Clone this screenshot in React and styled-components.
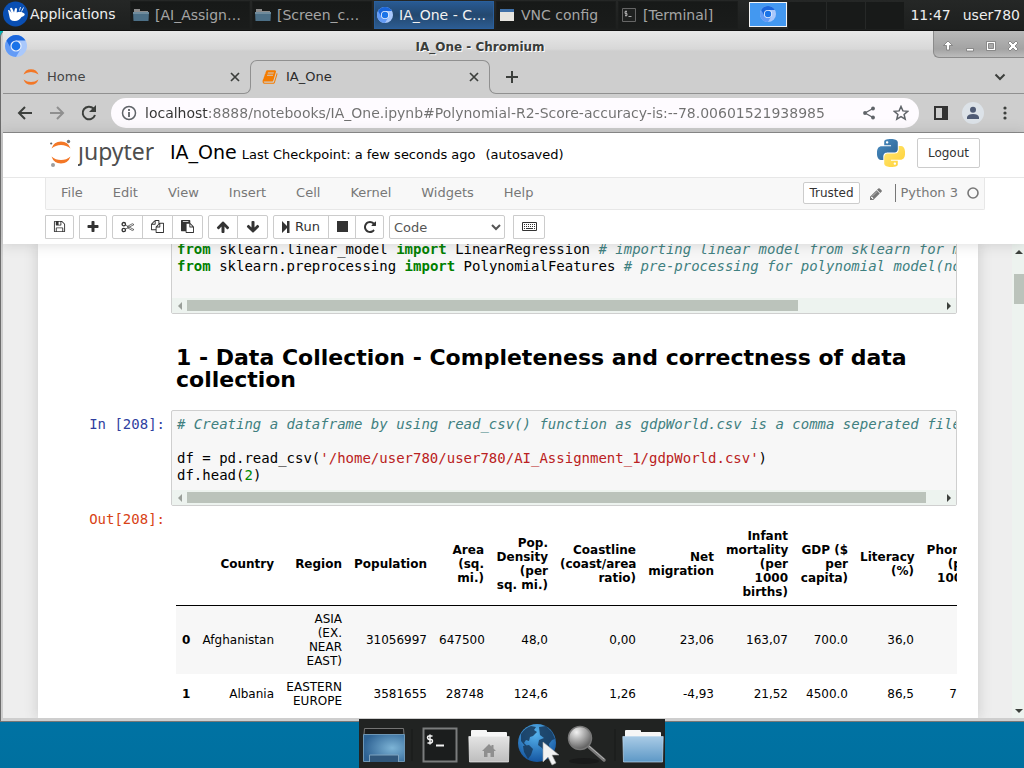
import React from "react";
import styled, { createGlobalStyle, css } from "styled-components";

const GlobalStyle = createGlobalStyle`
  *, *::before, *::after { box-sizing: border-box; }
  body {
    margin: 0;
    font-family: "DejaVu Sans", sans-serif;
    font-size: 13px;
    color: #000;
  }
  button, input, select { font-family: inherit; }
  svg { display: block; flex: none; }
`;

/* ---------- desktop ---------- */

const Desktop = styled.div`
  position: relative;
  display: flex;
  flex-direction: column;
  height: 100vh;
  min-height: 480px;
  overflow: hidden;
  background: linear-gradient(#00b8b8, #0074a6 90%, #00709f);
`;

const Taskbar = styled.header`
  display: flex;
  align-items: center;
  height: 31px;
  flex: none;
  background: linear-gradient(#252726, #1d1f1e);
  border-bottom: 1px solid #111;
  color: #eee;
  font-size: 14px;
`;

const AppsButton = styled.button`
  display: flex;
  align-items: center;
  gap: 2px;
  width: 130px;
  height: 100%;
  padding: 0 0 2px 3px;
  border: 0;
  background: none;
  color: inherit;
  font-size: 14px;
`;

const TaskList = styled.nav`
  display: flex;
  flex: 1;
  gap: 2px;
`;

const TaskButton = styled.button`
  display: flex;
  align-items: center;
  gap: 6px;
  width: 120px;
  height: 28px;
  padding: 0 2px 1px;
  border: 1px solid ${(p) => (p.$active ? "#2a5f9c" : "#1b1d1c")};
  background: ${(p) => (p.$active ? "linear-gradient(#285a93, #24486f 50%, #2c5c91)" : "linear-gradient(#171918, #1a1c1b)")};
  color: ${(p) => (p.$active ? "#f2f2f2" : "#a5a5a5")};
  font-size: 14px;
  white-space: nowrap;
`;

const Pager = styled.div`
  display: flex;
  gap: 1px;
  height: 27px;
  background: #262827;
`;

const Workspace = styled.button`
  display: flex;
  align-items: center;
  justify-content: center;
  width: 38px;
  height: ${(p) => (p.$active ? "25px" : "27px")};
  padding: 0;
  border: ${(p) => (p.$active ? "1px solid #f4f4f4" : "0")};
  background: ${(p) => (p.$active ? "#4398f0" : "#181a19")};
`;

const Clock = styled.time`
  padding: 0 6px 1px;
`;

const UserName = styled.span`
  padding: 0 4px 1px 6px;
`;

/* ---------- browser window ---------- */

const Window = styled.main`
  display: flex;
  flex-direction: column;
  flex: 1;
  min-height: 0;
  margin-bottom: 46px;
  padding: 0 0 3px 2px;
  border-left: 1px solid #6c6c6c;
  border-bottom: 1px solid #777;
  border-top-left-radius: 6px;
  background: #cecece;
`;

const TitleBar = styled.div`
  display: flex;
  height: 27px;
  flex: none;
  padding-left: 2px;
  background: linear-gradient(#e8e8e8, #d8d8d8 18px, #cecece 20px);
`;

const TitleIcon = styled.span`
  padding-top: 4px;
`;

const Title = styled.h1`
  flex: 1;
  margin: 0;
  font-size: 12px;
  line-height: 32px;
  text-align: center;
  color: #3a3d3a;
  text-shadow: 1px 1px 0 #fff;
`;

const WindowControls = styled.div`
  display: flex;
  align-items: center;
  width: 91px;
  padding: 4px 0 0 3px;
  border: solid #8b8b8b;
  border-width: 0 0 1px 1px;
  border-bottom-left-radius: 6px;
  background: linear-gradient(#b9b9b9, #a3a3a3 18px, #bcbcbc);
`;

const ControlButton = styled.button`
  display: flex;
  justify-content: center;
  width: 22px;
  padding: 0;
  border: 0;
  background: none;
`;

const TabStrip = styled.div`
  display: flex;
  align-items: flex-end;
  height: 36px;
  flex: none;
`;

const tabBox = css`
  display: flex;
  align-items: center;
  width: 240px;
  height: 34px;
`;

const Tab = styled.div`
  ${tabBox}
  padding: 0 0 0 20px;
  border-bottom: 1px solid #909090;
  color: #444;
`;

const ActiveTab = styled.div`
  ${tabBox}
  position: relative;
  margin: 0 -1px;
  padding: 0 8px 1px 12px;
  color: #2b2b2b;
  &::before {
    content: "";
    position: absolute;
    inset: 0 0 auto;
    height: 8px;
    border: 1px solid #909090;
    border-bottom: 0;
    border-radius: 7px 7px 0 0;
  }
`;

const Shoulder = styled.span`
  width: 8px;
  height: 27px;
  border-bottom: 1px solid #909090;
  ${(p) =>
    p.$side === "left"
      ? "border-right: 1px solid #909090; border-bottom-right-radius: 7px;"
      : "border-left: 1px solid #909090; border-bottom-left-radius: 7px;"}
`;

const TabLabel = styled.span`
  flex: 1;
  margin-left: 8px;
  line-height: 16px;
`;

const StripRest = styled.div`
  display: flex;
  align-items: center;
  justify-content: space-between;
  flex: 1;
  height: 34px;
  padding: 0 16px 0 7px;
  border-bottom: 1px solid #909090;
`;

const IconButton = styled.button`
  display: flex;
  align-items: center;
  justify-content: center;
  width: ${(p) => p.$w || 16}px;
  height: 24px;
  padding: 0;
  border: 0;
  background: none;
  color: #3c3f3c;
`;

const BrowserBar = styled.div`
  display: flex;
  align-items: center;
  height: 39px;
  flex: none;
  padding: 0 3px 0 6px;
  border-bottom: 1px solid #8a8a8a;
`;

const AddressBar = styled.form`
  display: flex;
  align-items: center;
  flex: 1;
  height: 30px;
  margin: 0 6px;
  padding: 0 2px 0 10px;
  border-radius: 15px;
  background: #fefbff;
  color: #5f6368;
`;

const UrlInput = styled.input`
  flex: 1;
  min-width: 0;
  margin-left: 8px;
  padding: 0;
  border: 0;
  outline: 0;
  font-size: 14px;
  line-height: 20px;
  color: transparent;
  background: linear-gradient(90deg, #333 64px, #707070 64px);
  background-clip: text;
`;

/* ---------- jupyter page ---------- */

const Page = styled.section`
  display: flex;
  flex-direction: column;
  flex: 1;
  min-height: 0;
  background: #eee;
`;

const PageHeader = styled.header`
  position: relative;
  z-index: 1;
  flex: none;
  background: #fff;
  box-shadow: 0 0 12px 1px rgba(87, 87, 87, 0.2);
`;

const HeaderRow = styled.div`
  display: flex;
  align-items: center;
  height: 45px;
  padding: 0 44px 4px 47px;
  border-bottom: 1px solid #e7e7e7;
`;

const LogoLink = styled.a`
  display: flex;
  align-items: center;
  gap: 6px;
  width: 104px;
  color: #4e4e4e;
  text-decoration: none;
`;

/* The wordmark's j is dotless: the strip that holds the dot is clipped. */
const LogoText = styled.span`
  padding-bottom: 4px;
  font-family: "Noto Sans", sans-serif;
  font-size: 23px;
  line-height: 24px;
  clip-path: inset(6px 0 0);
`;

const NotebookTitle = styled.div`
  display: flex;
  align-items: baseline;
  flex: 1;
  margin-left: 16px;
  padding-bottom: 3px;
  white-space: nowrap;
`;

const NotebookName = styled.span`
  font-size: 19px;
  line-height: 24px;
`;

const Checkpoint = styled.span`
  margin-left: 5px;
`;

const Autosave = styled.span`
  margin-left: 10px;
`;

const LogoutButton = styled.button`
  height: 30px;
  margin-left: 12px;
  padding: 0 10px;
  border: 1px solid #ccc;
  border-radius: 2px;
  background: #fff;
  color: #333;
  font-size: 12px;
`;

const MenuBar = styled.nav`
  display: flex;
  align-items: center;
  height: 32px;
  margin: 0 39px 0 42px;
  padding-right: 4px;
  border: solid #e7e7e7;
  border-width: 0 1px 1px;
  border-radius: 0 0 2px 2px;
  background: #f8f8f8;
  color: #777;
`;

const MenuItem = styled.a`
  padding: 0 15px 2px;
  line-height: 20px;
  color: inherit;
  text-decoration: none;
`;

const Trusted = styled.button`
  height: 22px;
  margin: 0 9px 2px auto;
  padding: 0 5px;
  border: 1px solid #ccc;
  border-radius: 2px;
  background: #fff;
  color: #333;
  font-size: 12px;
`;

const Kernel = styled.span`
  display: flex;
  align-items: center;
  gap: 8px;
  margin: 0 0 2px 12px;
  padding-left: 5px;
  border-left: 1px solid #777;
  line-height: 18px;
`;

const ToolBar = styled.div`
  display: flex;
  gap: 5px;
  padding: 5px 42px;
`;

const ToolGroup = styled.div`
  display: flex;
`;

const ToolButton = styled.button`
  display: flex;
  align-items: center;
  justify-content: center;
  gap: 5px;
  width: ${(p) => p.$w || 30}px;
  height: 24px;
  padding: 0 0 1px;
  border: 1px solid #ccc;
  background: #fff;
  color: #333;
  font-size: 13px;
  & + & { margin-left: -1px; }
  &:first-child { border-radius: 2px 0 0 2px; }
  &:last-child { border-radius: 0 2px 2px 0; }
`;

const CellType = styled.select`
  width: 116px;
  height: 24px;
  margin-right: 3px;
  padding: 0;
  border: 1px solid #ccc;
  border-radius: 2px;
  background: #fff;
  color: #555;
  font-size: 13px;
`;

const Site = styled.div`
  display: flex;
  flex: 1;
  min-height: 0;
`;

const NotebookArea = styled.div`
  flex: 1;
  min-width: 0;
  overflow: hidden;
  padding: 0 34px 0 35px;
`;

const Notebook = styled.article`
  display: flow-root;
  min-height: 100%;
  padding-right: 21px;
  background: #fff;
  box-shadow: 0 0 12px 1px rgba(87, 87, 87, 0.2);
`;

const Cell = styled.div`
  display: flex;
`;

const Prompt = styled.div`
  flex: none;
  width: 133px;
  padding: ${(p) => (p.$out ? 5 : 6)}px 6px 0 0;
  font: 14px/17px "DejaVu Sans Mono", monospace;
  text-align: right;
  color: ${(p) => (p.$out ? "#d84315" : "#303f9f")};
`;

const CodeBox = styled.div`
  flex: 1;
  min-width: 0;
  border: 1px solid #cfcfcf;
  border-radius: 2px;
  background: #f7f7f7;
`;

const Code = styled.pre`
  margin: 0;
  padding: 5px 0 6px 5px;
  overflow: hidden;
  font: 14px/17px "DejaVu Sans Mono", monospace;
`;

const tokenStyles = {
  keyword: "color: #008000; font-weight: bold;",
  comment: "color: #408080; font-style: italic;",
  string: "color: #ba2121;",
  number: "color: #008800;",
};

const Token = styled.span`
  ${(p) => tokenStyles[p.$kind]}
`;

const HScroll = styled.div`
  display: flex;
  align-items: center;
  height: 15px;
  background: #edf3ef;
`;

const HTrack = styled.div`
  flex: 1;
`;

const HThumb = styled.div`
  width: ${(p) => p.$size}%;
  height: 11px;
  background: #bbc3bb;
`;

const Arrow = styled.span`
  display: flex;
  align-items: center;
  justify-content: center;
  flex: none;
  width: 15px;
  height: 15px;
  color: ${(p) => (p.$dim ? "#9a9f9a" : "#3c403c")};
`;

const TextCell = styled.div`
  padding: 33px 0 19px 138px;
`;

const SectionHeading = styled.h2`
  margin: 0;
  font-size: 22px;
  line-height: 22px;
`;

const FirstCell = styled(Cell)`
  margin-top: -9px;
`;

const Output = styled.div`
  flex: 1;
  min-width: 0;
  overflow: hidden;
  padding: 17px 0 0 5px;
`;

const DataTable = styled.table`
  width: 806px;
  table-layout: fixed;
  border-collapse: collapse;
  font-size: 12px;
  line-height: 14px;
  text-align: right;
  white-space: pre-line;
  th, td { padding: 6px; vertical-align: middle; }
  thead { border-bottom: 1px solid #000; }
  tbody tr:nth-child(odd) { background: #f7f7f7; }
`;

const VScroll = styled.div`
  display: flex;
  flex-direction: column;
  flex: none;
  width: 12px;
  padding-left: 2px;
  overflow: hidden;
  background: #edf3ef;
`;

const VTrack = styled.div`
  flex: 1;
  padding-top: 15px;
`;

const VThumb = styled.div`
  height: 30px;
  background: #bbc3bb;
`;

const VArrow = styled(Arrow)`
  width: 10px;
`;

/* ---------- dock ---------- */

const Dock = styled.nav`
  position: absolute;
  bottom: 0;
  left: 50%;
  transform: translateX(-50%);
  display: flex;
  align-items: center;
  gap: 7px;
  width: 306px;
  height: 49px;
  padding: 2px 0 0 4px;
  background: #212322;
`;

const DockButton = styled.button`
  display: flex;
  justify-content: center;
  width: 42px;
  padding: 0;
  border: 0;
  background: none;
`;

const DockDivider = styled.span`
  width: 2px;
  height: 32px;
  margin: 0 -1px;
  background: #1c1e1d;
`;

/* ---------- icons ---------- */

const faPaths = {
  plus: "M1600 736v192q0 40-28 68t-68 28h-416v416q0 40-28 68t-68 28h-192q-40 0-68-28t-28-68v-416h-416q-40 0-68-28t-28-68v-192q0-40 28-68t68-28h416v-416q0-40 28-68t68-28h192q40 0 68 28t28 68v416h416q40 0 68 28t28 68z",
  save: "M512 1536h768v-384h-768v384zm896 0h128v-896q0-14-10-38.5t-20-34.5l-281-281q-10-10-34-20t-39-10v416q0 40-28 68t-68 28h-576q-40 0-68-28t-28-68v-416h-128v1280h128v-416q0-40 28-68t68-28h832q40 0 68 28t28 68v416zm-384-928v-320q0-13-9.5-22.5t-22.5-9.5h-192q-13 0-22.5 9.5t-9.5 22.5v320q0 13 9.5 22.5t22.5 9.5h192q13 0 22.5-9.5t9.5-22.5zm640 32v928q0 40-28 68t-68 28h-1344q-40 0-68-28t-28-68v-1344q0-40 28-68t68-28h928q40 0 88 20t76 48l280 280q28 28 48 76t20 88z",
  copy: "M1696 384q40 0 68 28t28 68v1216q0 40-28 68t-68 28h-960q-40 0-68-28t-28-68v-288h-544q-40 0-68-28t-28-68v-672q0-40 20-88t48-76l408-408q28-28 76-48t88-20h416q40 0 68 28t28 68v328q68-40 128-40h416zm-544 213l-299 299h299v-299zm-640-384l-299 299h299v-299zm196 647l316-316v-416h-384v416q0 40-28 68t-68 28h-416v640h512v-256q0-40 20-88t48-76zm956 804v-1152h-384v416q0 40-28 68t-68 28h-416v640h896z",
  paste: "M768 1664h896v-640h-416q-40 0-68-28t-28-68v-416h-384v1152zm256-1440v-64q0-13-9.5-22.5t-22.5-9.5h-704q-13 0-22.5 9.5t-9.5 22.5v64q0 13 9.5 22.5t22.5 9.5h704q13 0 22.5-9.5t9.5-22.5zm256 672h299l-299-299v299zm512 128v672q0 40-28 68t-68 28h-960q-40 0-68-28t-28-68v-160h-544q-40 0-68-28t-28-68v-1344q0-40 28-68t68-28h1088q40 0 68 28t28 68v328q21 13 36 28l408 408q28 28 48 76t20 88z",
  up: "M1675 971q0 51-37 90l-75 75q-38 38-91 38-54 0-90-38l-294-293v704q0 52-37.5 84.5t-90.5 32.5h-128q-53 0-90.5-32.5t-37.5-84.5v-704l-294 293q-36 38-90 38t-90-38l-75-75q-38-38-38-90 0-53 38-91l651-651q35-37 90-37 54 0 91 37l651 651q37 39 37 91z",
  repeat: "M1664 256v448q0 26-19 45t-45 19h-448q-42 0-59-40-17-39 14-69l138-138q-148-137-349-137-104 0-198.5 40.5t-163.5 109.5-109.5 163.5-40.5 198.5 40.5 198.5 109.5 163.5 163.5 109.5 198.5 40.5q119 0 225-52t179-147q7-10 23-12 15 0 25 9l137 138q9 8 9.5 20.5t-7.5 22.5q-109 132-264 204.5t-327 72.5q-156 0-298-61t-245-164-164-245-61-298 61-298 164-245 245-164 298-61q147 0 284.5 55.5t244.5 156.5l130-129q29-31 70-14 39 17 39 59z",
  pencil: "M491 1536l91-91-235-235-91 91v107h128v128h107zm523-928q0-22-22-22-10 0-17 7l-542 542q-7 7-7 17 0 22 22 22 10 0 17-7l542-542q7-7 7-17zm-54-192l416 416-832 832h-416v-416zm683 96q0 53-37 90l-166 166-416-416 166-165q36-38 90-38 53 0 91 38l235 234q37 39 37 91z",
  book: "M1703 478q40 57 18 129l-275 906q-19 64-76.5 107.5t-122.5 43.5h-923q-77 0-148.5-53.5t-99.5-131.5q-24-67-2-127 0-4 3-27t4-37q1-8-3-21.5t-3-19.5q2-11 8-21t16.5-23.5 16.5-23.5q23-38 45-91.5t30-91.5q3-10 .5-30t-.5-28q3-11 17-28t17-23q21-36 42-92t25-90q1-9-2.5-32t.5-28q4-13 22-30.5t22-22.5q19-26 42.5-84.5t27.5-96.5q1-8-3-25.5t-2-26.5q2-8 9-18t18-23 17-21q8-12 16.5-30.5t15-35 16-36 19.5-32 26.5-23.5 36-11.5 47.5 5.5l-1 3q38-9 51-9h761q74 0 114 56t18 130l-274 906q-36 119-71.5 153.5t-128.5 34.5h-869q-27 0-38 15-11 16-1 43 24 70 144 70h923q29 0 56-15.5t35-41.5l300-987q7-22 5-57 38 15 59 43zm-1064 2q-4 13 2 22.5t20 9.5h608q13 0 25.5-9.5t16.5-22.5l21-64q4-13-2-22.5t-20-9.5h-608q-13 0-25.5 9.5t-16.5 22.5zm-83 256q-4 13 2 22.5t20 9.5h608q13 0 25.5-9.5t16.5-22.5l21-64q4-13-2-22.5t-20-9.5h-608q-13 0-25.5 9.5t-16.5 22.5z",
};

const Glyph = ({ name, size = 14, color = "currentColor", flip }) => (
  <svg width={size} height={size} viewBox="0 0 1792 1792" fill={color}>
    <path d={faPaths[name]} transform={flip ? "rotate(180 896 896)" : undefined} />
  </svg>
);

const ChromiumIcon = ({ size = 22 }) => (
  <svg width={size} height={size} viewBox="0 0 22 22">
    <circle cx="11" cy="11" r="11" fill="#a9c8fb" />
    <path d="M11 11L1.5 5.5A11 11 0 0 0 11 22l4.8-8.3z" fill="#639bf6" />
    <path d="M1.5 5.5A11 11 0 0 1 20.5 5.5H11L6.2 13.7z" fill="#1a66dc" />
    <circle cx="11" cy="11" r="5.6" fill="#e8f0fe" />
    <circle cx="11" cy="11" r="4.4" fill="#1a73e8" />
  </svg>
);

const MouseLogo = () => (
  <svg width="25" height="26" viewBox="0 0 25 26">
    <circle cx="12.500" cy="13" r="12.500" fill="#0a4fb3" />
    <path d="M5 9q1.500-.5 2.500 1.500L8.500 12 7 7.500Q8.500 6 9.500 8l1.500 3.500L12 7.500q1.500-1 2 .5l-.3 3.500Q17 10 20.500 12q1.500.5 1.200 2-1.200 1.500-3.200 2-2.500 4-6.500 4-5 .3-5.500-4z" fill="#fff" />
    <path d="M16.500 9.500l1-3.500M18.500 10.500l2-4" stroke="#fff" strokeWidth=".9" />
  </svg>
);

const SmallFolder = () => (
  <svg width="16" height="16" viewBox="0 0 16 16">
    <path d="M1 2h6v2h8v2H1z" fill="#8c8c8c" />
    <path d="M0 5h16l-.5 9H.5z" fill="#4c6f86" />
    <path d="M0 5h16v2H0z" fill="#6f8b9c" />
  </svg>
);

const SmallWindow = () => (
  <svg width="16" height="16" viewBox="0 0 16 16">
    <path d="M1 2h14v12H1z" fill="#e6e4df" />
    <path d="M1 2h14v3H1z" fill="#3f6fa6" />
  </svg>
);

const SmallTerminal = () => (
  <svg width="16" height="16" viewBox="0 0 16 16">
    <path d="M1.500 1.500h13v13h-13z" fill="#1f2120" stroke="#666" />
    <path d="M6 4.500H4v2h2v2H4M5 3.500v6M7.500 9.500h3" fill="none" stroke="#aaa" />
  </svg>
);

const JupyterRings = ({ size = 16 }) => (
  <svg width={size} height={size} viewBox="0 0 16 16" fill="#f37726">
    <path d="M.5 5.500a8 8 0 0 1 15 0Q12 3 8 3T.5 5.500z" />
    <path d="M.5 10.500a8 8 0 0 0 15 0Q12 13 8 13T.5 10.500z" />
  </svg>
);

const JupyterLogo = () => (
  <svg width="22" height="28" viewBox="0 0 22 28">
    <path d="M1.500 9.500a10 10 0 0 1 19 0q-4-3.500-9.500-3.500t-9.500 3.500zM1.500 17.500a10 10 0 0 0 19 0q-4 3.500-9.500 3.500t-9.500-3.500z" fill="#f37726" />
    <circle cx="18.500" cy="2.500" r="1.700" fill="#767677" />
    <circle cx="1.200" cy="4.500" r="1.100" fill="#616262" />
    <circle cx="3" cy="26" r="2" fill="#9e9e9e" />
  </svg>
);

const snake =
  "M14.25.18l.9.2.73.26.59.3.45.32.34.34.25.34.16.33.1.3.04.26.02.2-.01.13V8.500l-.05.63-.13.55-.21.46-.26.38-.3.31-.33.25-.35.19-.35.14-.33.1-.3.07-.26.04-.21.02H8.77l-.69.05-.59.14-.5.22-.41.27-.33.32-.27.35-.2.36-.15.37-.1.35-.07.32-.04.27-.02.21v3.06H3.17l-.21-.03-.28-.07-.32-.12-.35-.18-.36-.26-.36-.36-.35-.46-.32-.59-.28-.73-.21-.88-.14-1.05-.05-1.23.06-1.22.16-1.04.24-.87.32-.71.36-.57.4-.44.42-.33.42-.24.4-.16.36-.1.32-.05.24-.01h.16l.06.01h8.16v-.83H6.18l-.01-2.75-.02-.37.05-.34.11-.31.17-.28.25-.26.31-.23.38-.2.44-.18.51-.15.58-.12.64-.1.71-.06.77-.04.84-.02 1.27.05zm-6.300 1.980l-.23.33-.08.41.08.41.23.34.33.22.41.09.41-.09.33-.22.23-.34.08-.41-.08-.41-.23-.33-.33-.22-.41-.09-.41.09z";

const PythonLogo = () => (
  <svg width="28" height="28" viewBox="0 0 24 24">
    <defs>
      <linearGradient id="pyBlue" x1="0" y1="0" x2="1" y2="1">
        <stop offset="0" stopColor="#4a8fc4" />
        <stop offset="1" stopColor="#2b5f8f" />
      </linearGradient>
      <linearGradient id="pyYellow" x1="1" y1="1" x2="0" y2="0">
        <stop offset="0" stopColor="#ffe873" />
        <stop offset="1" stopColor="#ffcf35" />
      </linearGradient>
    </defs>
    <path d={snake} fill="url(#pyBlue)" />
    <path d={snake} fill="url(#pyYellow)" transform="rotate(180 12 12)" />
  </svg>
);

const Line = ({ d, size = 16, width = 2, color = "currentColor", fill = "none" }) => (
  <svg width={size} height={size} viewBox={`0 0 ${size} ${size}`} fill={fill} stroke={color} strokeWidth={width}>
    <path d={d} />
  </svg>
);

const ReloadIcon = () => (
  <svg width="16" height="16" viewBox="0 0 16 16">
    <path d="M14 10A6.300 6.300 0 1 1 12.500 3.500" fill="none" stroke="currentColor" strokeWidth="2" />
    <path d="M15 0v7H8z" fill="currentColor" />
  </svg>
);

const InfoIcon = () => (
  <svg width="16" height="16" viewBox="0 0 16 16" fill="none" stroke="currentColor">
    <circle cx="8" cy="8" r="6.500" strokeWidth="1.500" />
    <path d="M8 7v5M8 4v2" strokeWidth="1.800" />
  </svg>
);

const ShareIcon = () => (
  <svg width="16" height="16" viewBox="0 0 16 16" fill="#5f6368">
    <path d="M12 3.500L4 8l8 4.500" fill="none" stroke="#5f6368" strokeWidth="1.300" />
    <circle cx="12" cy="3.500" r="1.900" />
    <circle cx="4" cy="8" r="1.900" />
    <circle cx="12" cy="12.500" r="1.900" />
  </svg>
);

const PanelIcon = () => (
  <svg width="16" height="16" viewBox="0 0 16 16">
    <path d="M2 2h12v12H2z" fill="none" stroke="#333" strokeWidth="2" />
    <path d="M9 2h5v12H9z" fill="#333" />
  </svg>
);

const AvatarIcon = () => (
  <svg width="22" height="22" viewBox="0 0 22 22">
    <circle cx="11" cy="11" r="11" fill="#dce2e8" />
    <g fill="#4e5a74">
      <circle cx="11" cy="7.800" r="3" />
      <path d="M5 17v-2q1-3 6-3t6 3v2z" />
    </g>
  </svg>
);

const DotsIcon = () => (
  <svg width="16" height="16" viewBox="0 0 16 16" fill="currentColor">
    <circle cx="8" cy="3" r="1.600" />
    <circle cx="8" cy="8" r="1.600" />
    <circle cx="8" cy="13" r="1.600" />
  </svg>
);

const ScissorsIcon = () => (
  <svg width="14" height="14" viewBox="0 0 14 14" fill="none" stroke="currentColor">
    <circle cx="2.800" cy="4.200" r="1.700" strokeWidth="1.300" />
    <circle cx="2.800" cy="10" r="1.700" strokeWidth="1.300" />
    <path d="M4.300 5l8.700 4.600-1.700.9-5.300-3M4.300 9.200L13 4.600l-1.700-.9L6 6.700" strokeWidth=".7" />
  </svg>
);

const StepIcon = () => (
  <svg width="8" height="12" viewBox="0 0 8 12" fill="currentColor">
    <path d="M0 0l5 5V0h2.500v12H5V7l-5 5z" />
  </svg>
);

const KeyboardIcon = () => (
  <svg width="15" height="9" viewBox="0 0 15 9" fill="none" stroke="currentColor">
    <path d="M.5.5h14v8H.5z" />
    <path d="M2 2.500h11M2 4.500h11" strokeDasharray="1 1" />
    <path d="M2 6.500h1M4 6.500h7M12 6.500h1" />
  </svg>
);

const KernelIdle = () => (
  <svg width="14" height="14" viewBox="0 0 14 14">
    <circle cx="7" cy="7" r="5" fill="none" stroke="#777" strokeWidth="1.600" />
  </svg>
);

const controlPaths = {
  up: <path d="M8 3l4.500 4.500H9.500V12h-3V7.500h-3z" />,
  min: <path d="M4.500 10.500h7v2.500h-7z" />,
  max: (
    <>
      <path d="M3.500 3.500h9v9h-9z" />
      <path d="M5.500 5.500h5v5h-5z" fill="#aaa" />
    </>
  ),
  close: <path d="M3 5l2-2 3 3 3-3 2 2-3 3 3 3-2 2-3-3-3 3-2-2 3-3z" />,
};

const ControlGlyph = ({ kind }) => (
  <svg width="16" height="16" viewBox="0 0 16 16" fill="#fff" stroke="#777" strokeWidth=".8">
    {controlPaths[kind]}
  </svg>
);

const triangles = { left: "M6 0v8L2 4z", right: "M2 0v8l4-4z", up: "M0 6h8L4 2z", down: "M0 2h8L4 6z" };
const Triangle = ({ dir }) => (
  <svg width="8" height="8" viewBox="0 0 8 8" fill="currentColor">
    <path d={triangles[dir]} />
  </svg>
);

const DesktopIcon = () => (
  <svg width="42" height="36" viewBox="0 0 42 36">
    <defs>
      <radialGradient id="screen" cx=".7" cy=".5" r=".7">
        <stop offset="0" stopColor="#7db4d6" />
        <stop offset="1" stopColor="#2e6293" />
      </radialGradient>
    </defs>
    <path d="M1.500 1.500h39l.5 6H1z" fill="#1a1b1b" stroke="#747474" />
    <path d="M.5 7.500h41v27H.5z" fill="url(#screen)" stroke="#6d96b5" />
    <path d="M6.500 35v-7h29v7" fill="#31587c" stroke="#7fa3bf" />
  </svg>
);

const TerminalIcon = () => (
  <svg width="36" height="36" viewBox="0 0 36 36">
    <path d="M1.500 1.500h33v33h-33z" fill="#1b1d1d" stroke="#7b7d7d" strokeWidth="2" />
    <path d="M10.500 9H7q-1.500 0-1.500 1.500T7 12.500h2q1.500 0 1.500 1.500T9 16H5.500M8 7.500v10" fill="none" stroke="#f2f2f2" strokeWidth="1.500" />
    <path d="M14 18.500h8" stroke="#f2f2f2" strokeWidth="2" />
  </svg>
);

const FolderIcon = ({ kind }) => (
  <svg width="42" height="36" viewBox="0 0 42 36">
    <defs>
      <linearGradient id={kind} x1="0" y1="0" x2="0" y2="1">
        <stop offset="0" stopColor={kind === "home" ? "#e4e4e4" : "#a9cbe6"} />
        <stop offset="1" stopColor={kind === "home" ? "#bdbdbd" : "#5d98c6"} />
      </linearGradient>
    </defs>
    <path d="M3 10V4q0-1 1-1h14q1 0 1 1v1h19q1 0 1 1v5z" fill="#f6f6f6" />
    <path d="M.8 9.500h40.400L40.500 35h-39z" fill={`url(#${kind})`} stroke={kind === "home" ? "#eee" : "#bcd7ec"} strokeWidth=".7" />
    {kind === "home" && <path d="M14 24l7-7 2.500 2.500V18h2v3.500L28 24h-2v6h-3.500v-4h-3v4H16v-6z" fill="#8f8f8f" />}
  </svg>
);

const GlobeIcon = () => (
  <svg width="42" height="44" viewBox="0 0 42 44">
    <defs>
      <radialGradient id="globe" cx=".45" cy=".25" r=".8">
        <stop offset="0" stopColor="#57b4ee" />
        <stop offset="1" stopColor="#104f9b" />
      </radialGradient>
    </defs>
    <circle cx="20" cy="20" r="19" fill="url(#globe)" />
    <path d="M4 11q4-6 10-8l5 1-2 3 3 2-4 4-3 1-1 4-3-1-2 3 4 4-3-1-4-5zM6 23l6-1 4 4-2 6-3 4-4-7zM22 4l7-1 6 6 3 7-3 1-3 4 1 6-4 5-4-7-4-3 1-5 5-2-4-3z" fill="#173a5c" opacity=".85" />
    <path d="M26 19v20l5-5 4 8 4-2-4-8h7z" fill="#f2f2f2" stroke="#aaa" strokeWidth=".6" />
  </svg>
);

const MagnifierIcon = () => (
  <svg width="42" height="40" viewBox="0 0 42 40">
    <defs>
      <radialGradient id="lens" cx=".35" cy=".25" r=".8">
        <stop offset="0" stopColor="#f2f2f2" />
        <stop offset="1" stopColor="#575757" />
      </radialGradient>
    </defs>
    <ellipse cx="18" cy="36" rx="15" ry="3" fill="#191a1a" />
    <path d="M23 22l15 13" stroke="#777" strokeWidth="3.500" strokeLinecap="round" />
    <path d="M23 21l15 13" stroke="#b5b5b5" strokeWidth="1" strokeLinecap="round" />
    <circle cx="14" cy="13" r="11.500" fill="url(#lens)" stroke="#777" strokeWidth="1.500" />
  </svg>
);

/* ---------- content ---------- */

const tasks = [
  { label: "[AI_Assign…", icon: <SmallFolder /> },
  { label: "[Screen_c…", icon: <SmallFolder /> },
  { label: "IA_One - C…", icon: <ChromiumIcon size={16} />, active: true },
  { label: "VNC config", icon: <SmallWindow /> },
  { label: "[Terminal]", icon: <SmallTerminal /> },
];

const menus = ["File", "Edit", "View", "Insert", "Cell", "Kernel", "Widgets", "Help"];

const columns = [
  { title: "", width: 20 },
  { title: "Country", width: 84 },
  { title: "Region", width: 68 },
  { title: "Population", width: 85 },
  { title: "Area\n(sq.\nmi.)", width: 57 },
  { title: "Pop.\nDensity\n(per\nsq. mi.)", width: 64 },
  { title: "Coastline\n(coast/area\nratio)", width: 88 },
  { title: "Net\nmigration", width: 78 },
  { title: "Infant\nmortality\n(per\n1000\nbirths)", width: 74 },
  { title: "GDP ($\nper\ncapita)", width: 60 },
  { title: "Literacy\n(%)", width: 66 },
  { title: "Phones\n(per\n1000)", width: 62 },
];

const rows = [
  ["0", "Afghanistan", "ASIA\n(EX.\nNEAR\nEAST)", "31056997", "647500", "48,0", "0,00", "23,06", "163,07", "700.0", "36,0", "3,2"],
  ["1", "Albania", "EASTERN\nEUROPE", "3581655", "28748", "124,6", "1,26", "-4,93", "21,52", "4500.0", "86,5", "71,2"],
];

const HorizontalScroll = ({ size }) => (
  <HScroll>
    <Arrow $dim><Triangle dir="left" /></Arrow>
    <HTrack><HThumb $size={size} /></HTrack>
    <Arrow><Triangle dir="right" /></Arrow>
  </HScroll>
);

const closePath = "M4 4l8 8M12 4l-8 8";

export default function App() {
  return (
    <Desktop>
      <GlobalStyle />
      <Taskbar>
        <AppsButton><MouseLogo />Applications</AppsButton>
        <TaskList>
          {tasks.map((t) => (
            <TaskButton key={t.label} $active={t.active}>{t.icon}{t.label}</TaskButton>
          ))}
        </TaskList>
        <Pager>
          <Workspace $active aria-label="Workspace 1"><ChromiumIcon size={16} /></Workspace>
          <Workspace aria-label="Workspace 2" />
          <Workspace aria-label="Workspace 3" />
          <Workspace aria-label="Workspace 4" />
        </Pager>
        <Clock>11:47</Clock>
        <UserName>user780</UserName>
      </Taskbar>

      <Window>
        <TitleBar>
          <TitleIcon><ChromiumIcon /></TitleIcon>
          <Title>IA_One - Chromium</Title>
          <WindowControls>
            {["up", "min", "max", "close"].map((k) => (
              <ControlButton key={k} aria-label={k}><ControlGlyph kind={k} /></ControlButton>
            ))}
          </WindowControls>
        </TitleBar>

        <TabStrip>
          <Tab>
            <JupyterRings />
            <TabLabel>Home</TabLabel>
            <IconButton aria-label="Close Home"><Line width={1.7} d={closePath} /></IconButton>
          </Tab>
          <Shoulder $side="left" />
          <ActiveTab>
            <Glyph name="book" size={16} color="#f57c00" />
            <TabLabel>IA_One</TabLabel>
            <IconButton aria-label="Close IA_One"><Line width={1.7} d={closePath} /></IconButton>
          </ActiveTab>
          <Shoulder $side="right" />
          <StripRest>
            <IconButton aria-label="New tab"><Line d="M8 2v12M2 8h12" /></IconButton>
            <IconButton aria-label="Search tabs"><Line d="M3.500 5.500L8 10l4.500-4.500" /></IconButton>
          </StripRest>
        </TabStrip>

        <BrowserBar>
          <IconButton $w={32} aria-label="Back"><Line d="M15 8H2M8 2L2 8l6 6" /></IconButton>
          <IconButton $w={32} aria-label="Forward"><Line d="M1 8h13M8 2l6 6-6 6" color="#8f8f8f" /></IconButton>
          <IconButton $w={32} aria-label="Reload"><ReloadIcon /></IconButton>
          <AddressBar>
            <InfoIcon />
            <UrlInput
              aria-label="Address"
              readOnly
              value="localhost:8888/notebooks/IA_One.ipynb#Polynomial-R2-Score-accuracy-is:--78.00601521938985"
            />
            <IconButton type="button" $w={32} aria-label="Share"><ShareIcon /></IconButton>
            <IconButton type="button" $w={32} aria-label="Bookmark">
              <Line width={1.5} color="#5f6368" d="M8 1.500l1.900 4.400 4.800.4-3.600 3.200 1.100 4.700L8 11.700l-4.200 2.500 1.100-4.700L1.300 6.300l4.800-.4z" />
            </IconButton>
          </AddressBar>
          <IconButton $w={32} aria-label="Side panel"><PanelIcon /></IconButton>
          <IconButton $w={32} aria-label="Profile"><AvatarIcon /></IconButton>
          <IconButton $w={32} aria-label="Menu"><DotsIcon /></IconButton>
        </BrowserBar>

        <Page>
          <PageHeader>
            <HeaderRow>
              <LogoLink href="#home"><JupyterLogo /><LogoText>jupyter</LogoText></LogoLink>
              <NotebookTitle>
                <NotebookName>IA_One</NotebookName>
                <Checkpoint>Last Checkpoint: a few seconds ago</Checkpoint>
                <Autosave>(autosaved)</Autosave>
              </NotebookTitle>
              <PythonLogo />
              <LogoutButton>Logout</LogoutButton>
            </HeaderRow>
            <MenuBar>
              {menus.map((m) => <MenuItem key={m} href={`#${m}`}>{m}</MenuItem>)}
              <Trusted>Trusted</Trusted>
              <Glyph name="pencil" size={14} />
              <Kernel>Python 3<KernelIdle /></Kernel>
            </MenuBar>
            <ToolBar>
              <ToolGroup><ToolButton $w={29} aria-label="Save"><Glyph name="save" size={13} /></ToolButton></ToolGroup>
              <ToolGroup><ToolButton $w={28} aria-label="Insert cell"><Glyph name="plus" /></ToolButton></ToolGroup>
              <ToolGroup>
                <ToolButton $w={31} aria-label="Cut"><ScissorsIcon /></ToolButton>
                <ToolButton $w={31} aria-label="Copy"><Glyph name="copy" size={13} /></ToolButton>
                <ToolButton $w={31} aria-label="Paste"><Glyph name="paste" size={13} /></ToolButton>
              </ToolGroup>
              <ToolGroup>
                <ToolButton aria-label="Move up"><Glyph name="up" /></ToolButton>
                <ToolButton $w={31} aria-label="Move down"><Glyph name="up" flip /></ToolButton>
              </ToolGroup>
              <ToolGroup>
                <ToolButton $w={56}><StepIcon />Run</ToolButton>
                <ToolButton $w={28} aria-label="Stop">
                  <svg width="11" height="11" viewBox="0 0 11 11"><path d="M0 0h11v11H0z" fill="#333" /></svg>
                </ToolButton>
                <ToolButton $w={29} aria-label="Restart"><Glyph name="repeat" size={14} /></ToolButton>
              </ToolGroup>
              <CellType aria-label="Cell type" defaultValue="Code">
                <option>Code</option>
                <option>Markdown</option>
              </CellType>
              <ToolGroup><ToolButton $w={32} aria-label="Command palette"><KeyboardIcon /></ToolButton></ToolGroup>
            </ToolBar>
          </PageHeader>

          <Site>
            <NotebookArea>
              <Notebook>
                <FirstCell>
                  <Prompt />
                  <CodeBox>
                    <Code>
                      <Token $kind="keyword">from</Token>{" sklearn.linear_model "}
                      <Token $kind="keyword">import</Token>{" LinearRegression "}
                      <Token $kind="comment"># importing linear model from sklearn for model</Token>{"\n"}
                      <Token $kind="keyword">from</Token>{" sklearn.preprocessing "}
                      <Token $kind="keyword">import</Token>{" PolynomialFeatures "}
                      <Token $kind="comment"># pre-processing for polynomial model(non linear)</Token>{"\n "}
                    </Code>
                    <HorizontalScroll size={81} />
                  </CodeBox>
                </FirstCell>
                <TextCell>
                  <SectionHeading>1 - Data Collection - Completeness and correctness of data collection</SectionHeading>
                </TextCell>
                <Cell>
                  <Prompt>In [208]:</Prompt>
                  <CodeBox>
                    <Code>
                      <Token $kind="comment"># Creating a dataframe by using read_csv() function as gdpWorld.csv is a comma seperated file</Token>
                      {"\n\ndf = pd.read_csv("}
                      <Token $kind="string">'/home/user780/user780/AI_Assignment_1/gdpWorld.csv'</Token>{")\ndf.head("}
                      <Token $kind="number">2</Token>{")"}
                    </Code>
                    <HorizontalScroll size={98} />
                  </CodeBox>
                </Cell>
                <Cell>
                  <Prompt $out>Out[208]:</Prompt>
                  <Output>
                    <DataTable>
                      <colgroup>
                        {columns.map((c) => <col key={c.title} width={c.width} />)}
                      </colgroup>
                      <thead>
                        <tr>{columns.map((c) => <th key={c.title} scope="col">{c.title}</th>)}</tr>
                      </thead>
                      <tbody>
                        {rows.map(([id, ...cells]) => (
                          <tr key={id}>
                            <th scope="row">{id}</th>
                            {cells.map((v) => <td key={v}>{v}</td>)}
                          </tr>
                        ))}
                      </tbody>
                    </DataTable>
                  </Output>
                </Cell>
              </Notebook>
            </NotebookArea>
            <VScroll>
              <VArrow><Triangle dir="up" /></VArrow>
              <VTrack><VThumb /></VTrack>
              <VArrow><Triangle dir="down" /></VArrow>
            </VScroll>
          </Site>
        </Page>
      </Window>

      <Dock>
        <DockButton aria-label="Show desktop"><DesktopIcon /></DockButton>
        <DockDivider />
        <DockButton aria-label="Terminal"><TerminalIcon /></DockButton>
        <DockButton aria-label="Home folder"><FolderIcon kind="home" /></DockButton>
        <DockButton aria-label="Web browser"><GlobeIcon /></DockButton>
        <DockButton aria-label="Search"><MagnifierIcon /></DockButton>
        <DockDivider />
        <DockButton aria-label="Files"><FolderIcon kind="files" /></DockButton>
      </Dock>
    </Desktop>
  );
}
